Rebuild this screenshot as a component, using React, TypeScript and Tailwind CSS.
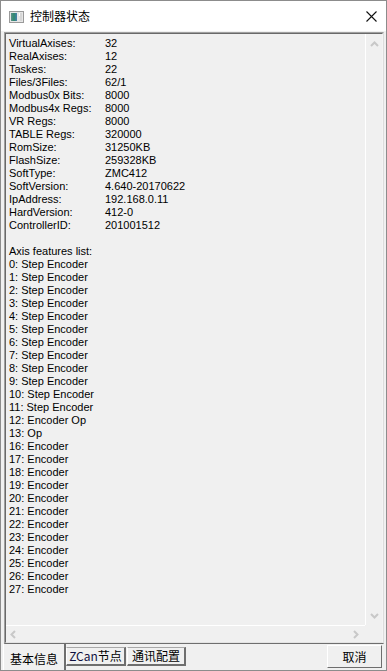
import React from "react";

const info: [string, string][] = [
  ["VirtualAxises:", "32"],
  ["RealAxises:", "12"],
  ["Taskes:", "22"],
  ["Files/3Files:", "62/1"],
  ["Modbus0x Bits:", "8000"],
  ["Modbus4x Regs:", "8000"],
  ["VR Regs:", "8000"],
  ["TABLE Regs:", "320000"],
  ["RomSize:", "31250KB"],
  ["FlashSize:", "259328KB"],
  ["SoftType:", "ZMC412"],
  ["SoftVersion:", "4.640-20170622"],
  ["IpAddress:", "192.168.0.11"],
  ["HardVersion:", "412-0"],
  ["ControllerID:", "201001512"],
];

const axes: string[] = [
  "0: Step Encoder",
  "1: Step Encoder",
  "2: Step Encoder",
  "3: Step Encoder",
  "4: Step Encoder",
  "5: Step Encoder",
  "6: Step Encoder",
  "7: Step Encoder",
  "8: Step Encoder",
  "9: Step Encoder",
  "10: Step Encoder",
  "11: Step Encoder",
  "12: Encoder Op",
  "13: Op",
  "16: Encoder",
  "17: Encoder",
  "18: Encoder",
  "19: Encoder",
  "20: Encoder",
  "21: Encoder",
  "22: Encoder",
  "23: Encoder",
  "24: Encoder",
  "25: Encoder",
  "26: Encoder",
  "27: Encoder",
];

function Chevron({ dir }: { dir: "up" | "down" | "left" | "right" }) {
  const pts =
    dir === "up"
      ? "1,5 4.5,1.5 8,5"
      : dir === "down"
      ? "1,2 4.5,5.5 8,2"
      : dir === "left"
      ? "5,1 1.5,4.5 5,8"
      : "2,1 5.5,4.5 2,8";
  const w = dir === "up" || dir === "down" ? 9 : 7;
  const h = dir === "up" || dir === "down" ? 7 : 9;
  return (
    <svg width={w} height={h} viewBox={`0 0 ${w} ${h}`}>
      <polyline points={pts} fill="none" stroke="#c8c8c8" strokeWidth="2" />
    </svg>
  );
}

function TitleIcon() {
  return (
    <svg width="15" height="12" viewBox="0 0 15 12">
      <defs>
        <linearGradient id="g1" x1="0" y1="0" x2="1" y2="0">
          <stop offset="0" stopColor="#5f8f8a" />
          <stop offset="0.5" stopColor="#2f8a6e" />
          <stop offset="1" stopColor="#4a7fae" />
        </linearGradient>
      </defs>
      <rect x="0.5" y="0.5" width="14" height="11" fill="#e6e6e6" stroke="#9a9a9a" />
      <rect x="2" y="2" width="6" height="8" fill="url(#g1)" />
      <rect x="10" y="2" width="1" height="3" fill="#ffffff" />
      <rect x="11" y="2" width="2" height="8" fill="#d6d6d6" />
    </svg>
  );
}

export default function App() {
  const font = { fontFamily: '"Liberation Sans", Arial, sans-serif' };
  const cjk = { fontFamily: '"Noto Sans CJK SC", "Liberation Sans", sans-serif' };
  return (
    <div className="w-[387px] h-[671px] bg-[#f0f0f0] border border-[#8c8c8c] flex flex-col overflow-hidden">
      {/* Title bar */}
      <div className="h-[30px] bg-white flex items-center shrink-0">
        <div className="ml-[8px] mt-[1px] flex">
          <TitleIcon />
        </div>
        <div className="ml-[6px] text-[12px] leading-[14px] text-black" style={cjk}>
          控制器状态
        </div>
        <div className="flex-1" />
        <div className="mr-[9px] flex">
          <svg width="11" height="11" viewBox="0 0 11 11">
            <path d="M0.5 0.5 L10.5 10.5 M10.5 0.5 L0.5 10.5" stroke="#111" strokeWidth="1.1" />
          </svg>
        </div>
      </div>

      {/* Edit box */}
      <div className="mt-[1px] ml-[3px] mr-[2px] h-[612px] shrink-0 border border-[#a0a0a0] border-b-[#6e6e6e] border-r-[#dcdcdc]">
        <div className="w-full h-full border border-t-[#696969] border-l-[#696969] border-r-[#f4f4f4] border-b-[#e3e3e3] flex flex-col">
          <div className="flex-1 flex min-h-0">
            <div className="flex-1 pl-[3px] pt-[3px] text-[11px] leading-[13px] text-black overflow-hidden" style={font}>
              {info.map(([k, v]) => (
                <div key={k} className="flex h-[13px] whitespace-nowrap">
                  <div className="w-[96px]">{k}</div>
                  <div>{v}</div>
                </div>
              ))}
              <div className="h-[13px]" />
              <div className="h-[13px] whitespace-nowrap">Axis features list:</div>
              {axes.map((a) => (
                <div key={a} className="h-[13px] whitespace-nowrap">
                  {a}
                </div>
              ))}
            </div>
            <div className="w-[17px] border-l border-white flex flex-col items-center justify-between pt-[7px] pb-[6px]">
              <Chevron dir="up" />
              <Chevron dir="down" />
            </div>
          </div>
          <div className="h-[17px] flex shrink-0">
            <div className="flex-1 border-t border-white flex items-center justify-between pl-[4px] pr-[6px]">
              <Chevron dir="left" />
              <Chevron dir="right" />
            </div>
            <div className="w-[17px]" />
          </div>
        </div>
      </div>

      {/* Bottom row */}
      <div className="flex-1 flex items-start text-[12px] text-black" style={cjk}>
        <div className="ml-[2px] w-[63px] h-full border-l border-white border-r-2 border-r-[#6e6e6e] flex items-center justify-center pt-[3px]">
          基本信息
        </div>
        <div className="mt-[3px] w-[60px] h-[19px] border-l border-t border-white border-t-[#a8a8a8] border-r-2 border-b-2 border-r-[#6e6e6e] border-b-[#6e6e6e] flex items-center justify-center leading-[14px]">
          <span className="text-[#101040]">ZCan</span>节点
        </div>
        <div className="ml-[1px] mt-[3px] w-[59px] h-[19px] border-l border-t border-white border-t-[#a8a8a8] border-r-2 border-b-2 border-r-[#6e6e6e] border-b-[#6e6e6e] flex items-center justify-center leading-[14px]">
          通讯配置
        </div>
        <div className="flex-1" />
        <div className="mt-[1px] mr-[4px] w-[55px] h-[23px] border border-t-white border-l-white border-r-[#6e6e6e] border-b-[#6e6e6e] bg-[#f0f0f0] flex items-center justify-center leading-[14px]">
          取消
        </div>
      </div>
    </div>
  );
}
